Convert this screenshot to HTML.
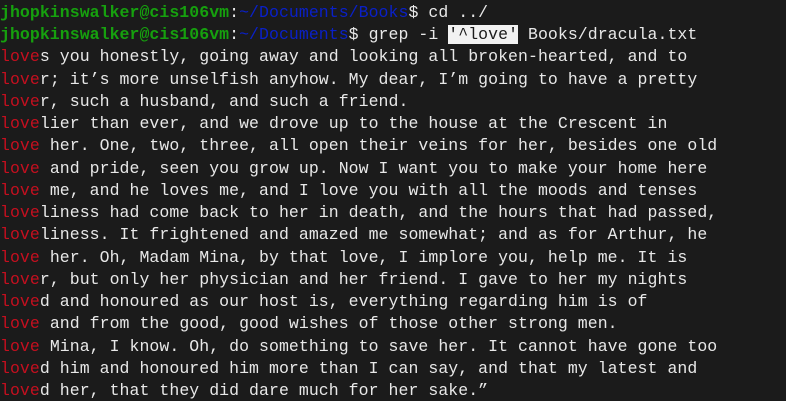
<!DOCTYPE html>
<html><head><meta charset="utf-8"><style>
html,body{margin:0;padding:0;background:#1b1b1b;width:786px;height:401px;overflow:hidden}
pre{margin:0;padding:2px 0 0 0;font-family:"Liberation Mono",monospace;font-size:16.5px;line-height:22.24px;color:#e8e8e8;letter-spacing:0.06px}
.g{color:#16a00e;font-weight:bold}.b{color:#0a20c8}.r{color:#c50f1f}
.h{background:#f2f2f2;color:#1b1b1b}
</style></head><body><pre><span class="g">jhopkinswalker@cis106vm</span>:<span class="b">~/Documents/Books</span>$ cd ../
<span class="g">jhopkinswalker@cis106vm</span>:<span class="b">~/Documents</span>$ grep -i <span class="h">'^love'</span> Books/dracula.txt
<span class="r">love</span>s you honestly, going away and looking all broken-hearted, and to
<span class="r">love</span>r; it’s more unselfish anyhow. My dear, I’m going to have a pretty
<span class="r">love</span>r, such a husband, and such a friend.
<span class="r">love</span>lier than ever, and we drove up to the house at the Crescent in
<span class="r">love</span> her. One, two, three, all open their veins for her, besides one old
<span class="r">love</span> and pride, seen you grow up. Now I want you to make your home here
<span class="r">love</span> me, and he loves me, and I love you with all the moods and tenses
<span class="r">love</span>liness had come back to her in death, and the hours that had passed,
<span class="r">love</span>liness. It frightened and amazed me somewhat; and as for Arthur, he
<span class="r">love</span> her. Oh, Madam Mina, by that love, I implore you, help me. It is
<span class="r">love</span>r, but only her physician and her friend. I gave to her my nights
<span class="r">love</span>d and honoured as our host is, everything regarding him is of
<span class="r">love</span> and from the good, good wishes of those other strong men.
<span class="r">love</span> Mina, I know. Oh, do something to save her. It cannot have gone too
<span class="r">love</span>d him and honoured him more than I can say, and that my latest and
<span class="r">love</span>d her, that they did dare much for her sake.”
</pre></body></html>
